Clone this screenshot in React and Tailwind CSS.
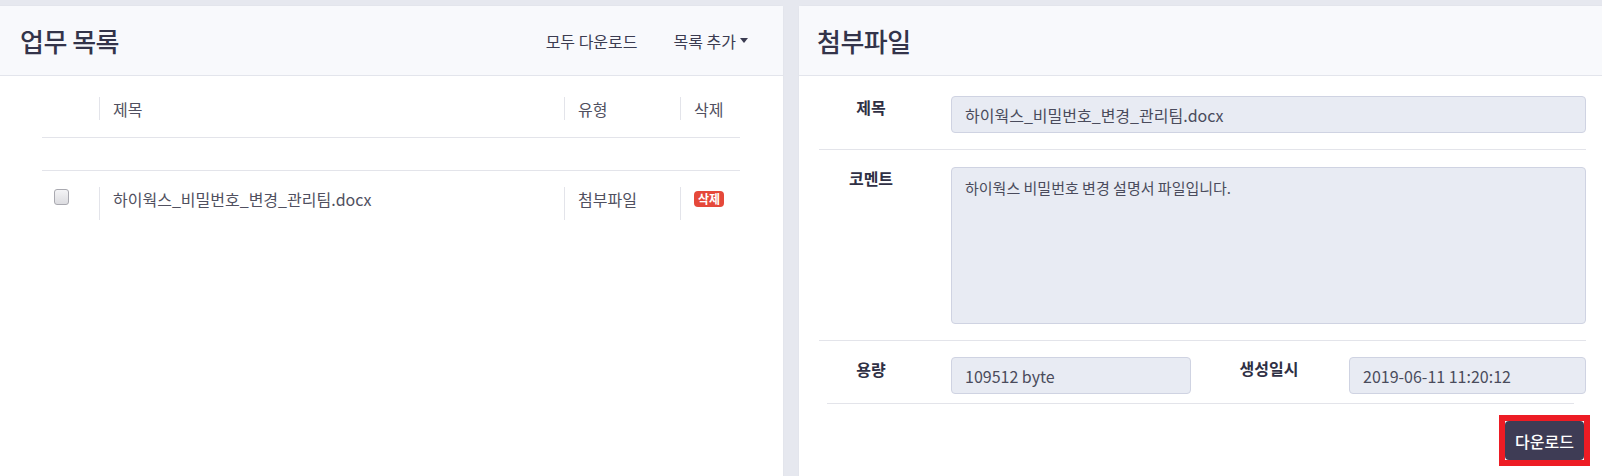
import React from 'react';

const font = { fontFamily: '"Noto Sans CJK KR", "Noto Sans", sans-serif' };

const Caret = () => (
    <svg width="8" height="5" viewBox="0 0 8 5" className="ml-[4px] inline-block">
        <path d="M0 0 L8 0 L4 5 Z" fill="#3b3c51" />
    </svg>
);

const Checkbox = () => (
    <span className="block w-[15px] h-[16px] rounded-[3px] border border-[#a9a9b0] bg-gradient-to-b from-[#f4f4f6] to-[#dcdce0]" />
);

const TaskList = () => (
    <div className="w-[784px] bg-white rounded-tr-[4px] border-t border-r border-[#e3e5ec] flex flex-col">
        <div className="h-[70px] flex items-center justify-between pl-[20px] pr-[35px] bg-[#f8f9fc] border-b border-[#e3e5ec]">
            <h2 className="text-[26px] font-medium text-[#33344a] tracking-[-0.5px]">업무 목록</h2>
            <div className="flex items-center gap-[36px] text-[16px] text-[#3b3c51]">
                <span>모두 다운로드</span>
                <span className="flex items-center">목록 추가<Caret /></span>
            </div>
        </div>

        <div className="ml-[42px] w-[698px] text-[16px] text-[#505060]">
            <div className="flex pt-[21px] pb-[17px] border-b border-[#e3e4ea]">
                <div className="w-[57px]" />
                <div className="w-[465px] h-[23px] flex items-center pl-[13px] border-l border-[#e3e4ea]">제목</div>
                <div className="w-[116px] h-[23px] flex items-center pl-[13px] border-l border-[#e3e4ea]">유형</div>
                <div className="flex-1 h-[23px] flex items-center pl-[13px] border-l border-[#e3e4ea]">삭제</div>
            </div>
            <div className="h-[33px] border-b border-[#e3e4ea]" />
            <div className="flex pt-[16px]">
                <div className="w-[57px] pl-[12px] pt-[2px]"><Checkbox /></div>
                <div className="w-[465px] h-[33px] flex items-start pl-[13px] border-l border-[#e3e4ea] leading-[24px]">하이웍스_비밀번호_변경_관리팀.docx</div>
                <div className="w-[116px] h-[33px] flex items-start pl-[13px] border-l border-[#e3e4ea] leading-[24px]">첨부파일</div>
                <div className="flex-1 h-[33px] flex items-start pl-[13px] pt-[4px] border-l border-[#e3e4ea]">
                    <span className="h-[16px] px-[4px] rounded-[4px] bg-[#e5483a] text-white text-[12px] font-bold leading-[16px]">삭제</span>
                </div>
            </div>
        </div>
    </div>
);

const Field = ({ children, className = '' }) => (
    <div className={`bg-[#e8ebf3] border border-[#cfd3e2] rounded-[4px] px-[13px] text-[#4a4b5c] ${className}`}>
        {children}
    </div>
);

const Label = ({ children, className = '' }) => (
    <div className={`w-[104px] text-center text-[16px] font-semibold text-[#2f3044] ${className}`}>{children}</div>
);

const Attachment = () => (
    <div className="flex-1 bg-white rounded-tl-[4px] border-t border-l border-[#e3e5ec] flex flex-col">
        <div className="h-[70px] flex items-center pl-[18px] bg-[#f8f9fc] border-b border-[#e3e5ec]">
            <h2 className="text-[26px] font-medium text-[#33344a] tracking-[-0.5px]">첨부파일</h2>
        </div>

        <div className="pl-[20px] pr-[16px]">
            <div className="flex pt-[20px] pb-[16px] border-b border-[#e3e4ea]">
                <Label className="-mt-[1px]">제목</Label>
                <Field className="ml-[28px] flex-1 h-[37px] flex items-center text-[16px]">하이웍스_비밀번호_변경_관리팀.docx</Field>
            </div>
            <div className="flex pt-[17px] pb-[16px] border-b border-[#e3e4ea]">
                <Label className="-mt-[1px]">코멘트</Label>
                <Field className="ml-[28px] flex-1 h-[157px] pt-[9px] text-[15px]">하이웍스 비밀번호 변경 설명서 파일입니다.</Field>
            </div>
            <div className="flex pt-[16px] pb-[9px]">
                <Label className="pt-[0px]">용량</Label>
                <Field className="ml-[28px] w-[240px] h-[37px] flex items-center text-[16px]">109512 byte</Field>
                <Label className="ml-[26px] -mt-[1px]">생성일시</Label>
                <Field className="ml-[28px] flex-1 h-[37px] flex items-center text-[16px]">2019-06-11 11:20:12</Field>
            </div>
        </div>
        <div className="mx-[28px] border-t border-[#e3e4ea]" />
        <div className="flex justify-end pr-[12px] mt-[11px]">
            <div className="border-[6px] border-[#ed1c24]">
                <button className="w-[79px] h-[39px] rounded-[4px] bg-[#3e3c55] text-white text-[16px] font-medium">다운로드</button>
            </div>
        </div>
    </div>
);

export default function App() {
    return (
        <div style={font} className="h-[476px] pt-[5px] bg-[#e6e8ef] flex gap-[14px] overflow-hidden">
            <TaskList />
            <Attachment />
        </div>
    );
}
